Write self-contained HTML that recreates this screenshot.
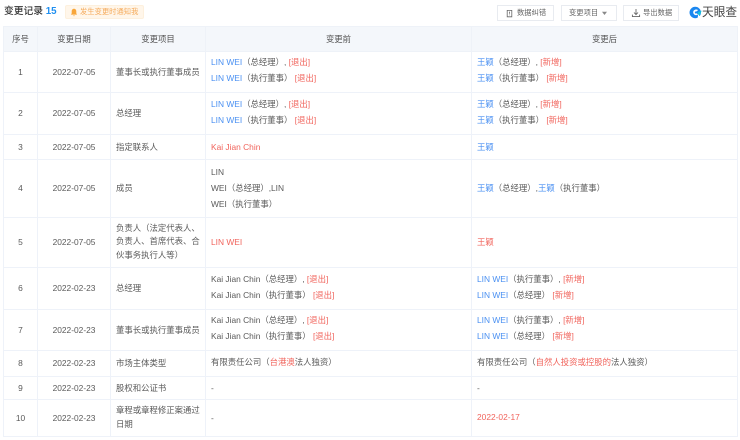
<!DOCTYPE html>
<html lang="zh">
<head>
<meta charset="utf-8">
<style>
html,body{margin:0;padding:0;background:#fff}
#p{position:relative;width:740px;height:440px;overflow:hidden;background:#fff;font-family:"Liberation Sans","Noto Sans CJK SC",sans-serif;font-size:8.4px;color:#5a5a5a;filter:blur(.3px)}
.a{position:absolute;white-space:nowrap}
.btn{position:absolute;top:5px;height:16px;border:1px solid #e8ebf0;box-sizing:border-box;line-height:14px;font-size:7.3px;color:#666;background:#fff;white-space:nowrap}
table{position:absolute;left:3px;top:26px;width:734px;border-collapse:collapse;table-layout:fixed}
td,th{border:1px solid #eef2f9;padding:0 5px 1px;font-weight:400;vertical-align:middle;text-align:left;line-height:16px;box-sizing:border-box;white-space:nowrap}
th{background:#f4f7fb;text-align:center;color:#555;height:25px;border-color:#eef2f8}
td.c{text-align:center;padding:0 0 1px}
td.w{line-height:13.4px}
td.t{padding-bottom:4px}
i{font-style:normal}
.b{color:#4a90f2}
.r{color:#f1645c}
</style>
</head>
<body>
<div id="p">
<div class="a" style="left:4px;top:5px;font-size:9.75px;line-height:14px;color:#333;font-weight:500">变更记录 <span style="color:#1f8ff0;font-weight:700">15</span></div>
<div class="a" style="left:65px;top:5px;width:79px;height:14px;background:#fff6ea;border:1px solid #fdf0dd;box-sizing:border-box;border-radius:2px;font-size:7.3px;line-height:12px;color:#f5ab5c;padding-left:14px">发生变更时通知我</div>
<svg class="a" style="left:70px;top:8px" width="8" height="9" viewBox="0 0 8 9"><path d="M4 .8C2.5.8 1.7 2 1.7 3.4V5.4L.9 6.6H7.1L6.3 5.4V3.4C6.3 2 5.5.8 4 .8Z" fill="#f8a63a"/><path d="M3.1 7.4H4.9L4 8.4Z" fill="#f8a63a"/></svg>

<div class="btn" style="left:497px;width:57px;padding-left:19px">数据纠错</div>
<svg class="a" style="left:505px;top:9px" width="9" height="9" viewBox="0 0 9 9" fill="none" stroke="#666" stroke-width=".8"><path d="M2.2 1.4H6.8V7.8H2.2Z"/><path d="M4.5 2.6V4.8M4.5 5.6V6.3"/></svg>
<div class="btn" style="left:561px;width:56px;padding-left:7px">变更项目</div>
<svg class="a" style="left:601px;top:11px" width="7" height="5" viewBox="0 0 7 5"><path d="M1 .8H6L3.5 4Z" fill="#888"/></svg>
<div class="btn" style="left:623px;width:56px;padding-left:19px">导出数据</div>
<svg class="a" style="left:631px;top:8px" width="10" height="10" viewBox="0 0 10 10" fill="none" stroke="#666" stroke-width=".9"><path d="M5 1V6.4M3 4.5L5 6.6L7 4.5M1.4 6.6V8.6H8.6V6.6"/></svg>

<svg class="a" style="left:688.5px;top:6px" width="13" height="13" viewBox="0 0 15 15"><circle cx="7.2" cy="7.5" r="6.6" fill="#1a87f0"/><path d="M10.5 4.7C9.4 3.8 7.2 3.6 5.8 4.9C4.4 6.2 4.6 8.6 6 9.8C7.4 11 9.2 10.7 10.4 9.7L8.8 8.3C8 8.9 7.1 8.7 6.8 7.9C6.5 6.9 7.5 5.9 8.5 6.3Z" fill="#fff"/><path d="M10 7.2L14.6 5.4L12.4 11L10.6 9.6Z" fill="#12c2d8"/><path d="M10.5 9.5L13.5 13L14.8 14.5H10Z" fill="#fff"/></svg>
<div class="a" style="left:702px;top:4px;font-size:11.7px;line-height:17px;color:#444;font-weight:400">天眼查</div>

<table>
<colgroup><col style="width:34px"><col style="width:73px"><col style="width:95px"><col style="width:266px"><col style="width:266px"></colgroup>
<tr><th>序号</th><th>变更日期</th><th>变更项目</th><th>变更前</th><th>变更后</th></tr>
<tr style="height:41px"><td class="c">1</td><td class="c">2022-07-05</td><td>董事长或执行董事成员</td><td class="t"><i class="b">LIN WEI</i>（总经理）, <i class="r">[退出]</i><br><i class="b">LIN WEI</i>（执行董事） <i class="r">[退出]</i></td><td class="t"><i class="b">王颖</i>（总经理）, <i class="r">[新增]</i><br><i class="b">王颖</i>（执行董事） <i class="r">[新增]</i></td></tr>
<tr style="height:42px"><td class="c">2</td><td class="c">2022-07-05</td><td>总经理</td><td class="t"><i class="b">LIN WEI</i>（总经理）, <i class="r">[退出]</i><br><i class="b">LIN WEI</i>（执行董事） <i class="r">[退出]</i></td><td class="t"><i class="b">王颖</i>（总经理）, <i class="r">[新增]</i><br><i class="b">王颖</i>（执行董事） <i class="r">[新增]</i></td></tr>
<tr style="height:25px"><td class="c">3</td><td class="c">2022-07-05</td><td>指定联系人</td><td class="r">Kai Jian Chin</td><td class="b">王颖</td></tr>
<tr style="height:58px"><td class="c">4</td><td class="c">2022-07-05</td><td>成员</td><td>LIN<br>WEI（总经理）,LIN<br>WEI（执行董事）</td><td><i class="b">王颖</i>（总经理）,<i class="b">王颖</i>（执行董事）</td></tr>
<tr style="height:50px"><td class="c">5</td><td class="c">2022-07-05</td><td class="w">负责人（法定代表人、<br>负责人、首席代表、合<br>伙事务执行人等）</td><td class="r">LIN WEI</td><td class="r">王颖</td></tr>
<tr style="height:42px"><td class="c">6</td><td class="c">2022-02-23</td><td>总经理</td><td class="t">Kai Jian Chin（总经理）, <i class="r">[退出]</i><br>Kai Jian Chin（执行董事） <i class="r">[退出]</i></td><td class="t"><i class="b">LIN WEI</i>（执行董事）, <i class="r">[新增]</i><br><i class="b">LIN WEI</i>（总经理） <i class="r">[新增]</i></td></tr>
<tr style="height:41px"><td class="c">7</td><td class="c">2022-02-23</td><td>董事长或执行董事成员</td><td class="t">Kai Jian Chin（总经理）, <i class="r">[退出]</i><br>Kai Jian Chin（执行董事） <i class="r">[退出]</i></td><td class="t"><i class="b">LIN WEI</i>（执行董事）, <i class="r">[新增]</i><br><i class="b">LIN WEI</i>（总经理） <i class="r">[新增]</i></td></tr>
<tr style="height:26px"><td class="c">8</td><td class="c">2022-02-23</td><td>市场主体类型</td><td style="padding-bottom:3px">有限责任公司（<i class="r">台港澳</i>法人独资）</td><td style="padding-bottom:3px">有限责任公司（<i class="r">自然人投资或控股的</i>法人独资）</td></tr>
<tr style="height:23px"><td class="c">9</td><td class="c">2022-02-23</td><td>股权和公证书</td><td>-</td><td>-</td></tr>
<tr style="height:37px"><td class="c">10</td><td class="c">2022-02-23</td><td class="w">章程或章程修正案通过<br>日期</td><td>-</td><td class="r" style="padding-bottom:3px">2022-02-17</td></tr>
</table>
</div>
</body>
</html>
